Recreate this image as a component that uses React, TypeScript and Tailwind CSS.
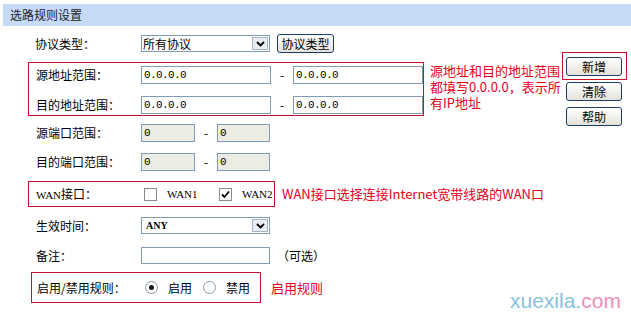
export default function App() {
  const cjk = "font-['Noto_Sans_CJK_SC',sans-serif]";
  const box = "border border-[#7f9db9] bg-white";
  const ip = "font-['Liberation_Mono',monospace] text-[11px] tracking-[-0.6px] text-black";
  const red = "text-[#e3001b] text-[13px]";
  const xpBtn =
    "flex items-center justify-center rounded-[3px] border border-[#1f3c6e] bg-gradient-to-b from-white to-[#e4e2d8] text-[12px] text-black";

  const Check = ({ on }: { on?: boolean }) => (
    <div className="flex h-[13px] w-[13px] items-center justify-center border border-[#8a8a8a] bg-white">
      {on && (
        <svg width="9" height="9" viewBox="0 0 9 9">
          <path d="M1 4.5 L3.5 7 L8 1.5" fill="none" stroke="#000" strokeWidth="1.8" />
        </svg>
      )}
    </div>
  );

  const Radio = ({ on }: { on?: boolean }) => (
    <div className="flex h-[13px] w-[13px] items-center justify-center rounded-full border border-[#8a98a8] bg-white">
      {on && <div className="h-[5px] w-[5px] rounded-full bg-[#1a1a1a]" />}
    </div>
  );

  const Arrow = () => (
    <div className="m-[1px] ml-auto flex w-[16px] items-center justify-center border border-[#a8b4c8] bg-[#e9ecf2]">
      <svg width="9" height="6" viewBox="0 0 9 6">
        <path d="M1 1 L4.5 4.5 L8 1" fill="none" stroke="#000" strokeWidth="1.8" />
      </svg>
    </div>
  );

  return (
    <div className={`relative h-[313px] w-[631px] overflow-hidden bg-white text-[12px] text-black ${cjk}`}>
      {/* header */}
      <div className="ml-[3px] mt-[4px] h-[22px] bg-[#c6daf8] pl-[7px] leading-[22px] text-[#222]">
        选路规则设置
      </div>

      <div className="flex items-start">
        {/* form */}
        <div className="flex w-[562px] flex-col pl-[28px]">
          {/* protocol */}
          <div className="mt-[8px] flex h-[19px] items-center">
            <div className="w-[113px] pl-[7px]">协议类型：</div>
            <div className={`flex h-[17px] w-[129px] ${box}`}>
              <span className="pl-[1px] leading-[15px]">所有协议</span>
              <Arrow />
            </div>
            <div className={`ml-[7px] h-[19px] w-[57px] ${xpBtn}`}>协议类型</div>
          </div>

          {/* address range */}
          <div className="mt-[9px] flex items-start">
            <div className="flex w-[396px] flex-col gap-[12px] border border-[#c8102e] pb-[1px] pt-[3px]">
              {["源地址范围：", "目的地址范围："].map((t) => (
                <div key={t} className="flex h-[18px] items-center">
                  <div className="w-[112px] pl-[7px]">{t}</div>
                  <div className={`flex h-[18px] w-[130px] items-center pl-[2px] ${box} ${ip}`}>0.0.0.0</div>
                  <div className="w-[22px] text-center">-</div>
                  <div className={`flex h-[18px] w-[130px] items-center pl-[2px] ${box} ${ip}`}>0.0.0.0</div>
                </div>
              ))}
            </div>
            <div className={`ml-[6px] mt-[1px] leading-[16px] ${red}`}>
              <div>源地址和目的地址范围</div>
              <div>都填写0.0.0.0，表示所</div>
              <div>有IP地址</div>
            </div>
          </div>

          {/* ports */}
          {[
            { t: "源端口范围：", m: "mt-[8px]" },
            { t: "目的端口范围：", m: "mt-[11px]" },
          ].map((r) => (
            <div key={r.t} className={`${r.m} flex h-[18px] items-center`}>
              <div className="w-[113px] pl-[8px]">{r.t}</div>
              <div className={`flex h-[18px] w-[54px] items-center border border-[#7f9db9] bg-[#ecebe4] pl-[2px] ${ip}`}>0</div>
              <div className="w-[22px] text-center">-</div>
              <div className={`flex h-[18px] w-[53px] items-center border border-[#7f9db9] bg-[#ecebe4] pl-[2px] ${ip}`}>0</div>
            </div>
          ))}

          {/* WAN */}
          <div className="mt-[10px] flex items-center">
            <div className="flex h-[26px] w-[247px] items-center border border-[#c8102e]">
              <div className="w-[112px] pl-[7px]">
                <span className="font-['Liberation_Serif',serif] text-[11px]">WAN</span>接口：
              </div>
              <div className="ml-[3px]">
                <Check />
              </div>
              <span className="ml-[10px] w-[52px] font-['Liberation_Serif',serif] text-[11px]">WAN1</span>
              <Check on />
              <span className="ml-[10px] font-['Liberation_Serif',serif] text-[11px]">WAN2</span>
            </div>
            <div className={`ml-[7px] ${red}`}>WAN接口选择连接Internet宽带线路的WAN口</div>
          </div>

          {/* time */}
          <div className="mt-[10px] flex h-[17px] items-center">
            <div className="w-[113px] pl-[8px]">生效时间：</div>
            <div className={`flex h-[17px] w-[129px] ${box}`}>
              <span className="pl-[4px] font-['Liberation_Serif',serif] text-[10px] font-bold leading-[15px]">ANY</span>
              <Arrow />
            </div>
          </div>

          {/* note */}
          <div className="mt-[13px] flex h-[17px] items-center">
            <div className="w-[113px] pl-[8px]">备注：</div>
            <div className={`h-[17px] w-[129px] ${box}`} />
            <span className="ml-[7px]">（可选）</span>
          </div>

          {/* enable */}
          <div className="ml-[3px] mt-[8px] flex items-center">
            <div className="flex h-[31px] w-[230px] items-center border border-[#c8102e]">
              <div className="w-[113px] pl-[5px]">启用/禁用规则：</div>
              <Radio on />
              <span className="ml-[10px]">启用</span>
              <div className="ml-[11px]">
                <Radio />
              </div>
              <span className="ml-[10px]">禁用</span>
            </div>
            <div className={`ml-[10px] ${red}`}>启用规则</div>
          </div>
        </div>

        {/* buttons */}
        <div className="flex w-[65px] flex-col pt-[26px]">
          <div className="border border-[#c8102e] pb-[3px] pl-[3px] pr-[4px] pt-[4px]">
            <div className={`h-[19px] w-[56px] ${xpBtn}`}>新增</div>
          </div>
          <div className={`ml-[4px] mt-[2px] h-[19px] w-[56px] ${xpBtn}`}>清除</div>
          <div className={`ml-[4px] mt-[6px] h-[19px] w-[56px] ${xpBtn}`}>帮助</div>
        </div>
      </div>

      {/* watermark */}
      <div className="absolute left-[510px] top-[290px] font-['Liberation_Sans',sans-serif] text-[21px] leading-none">
        <span className="text-[#86c2e0]">xuexila.</span>
        <span className="text-[#f08cb8]">com</span>
      </div>
    </div>
  );
}
